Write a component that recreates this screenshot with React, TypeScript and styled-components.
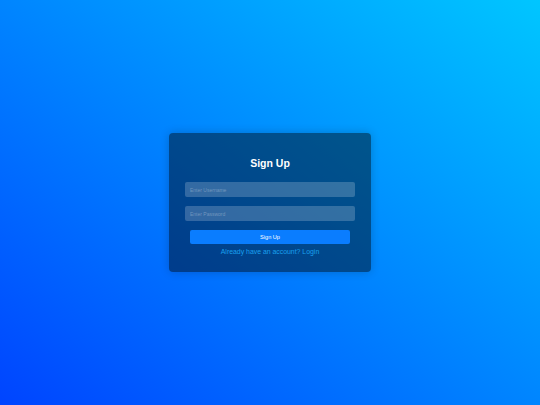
import React from "react";
import styled, { createGlobalStyle } from "styled-components";

const Global = createGlobalStyle`
  html, body { margin: 0; padding: 0; height: 100%; }
  body { font-family: "Liberation Sans", Arial, sans-serif; }
  #root { height: 100%; }
  * { box-sizing: border-box; }
`;

const Page = styled.div`
  height: 100vh;
  display: flex;
  align-items: center;
  justify-content: center;
  background: linear-gradient(to top right, #0044ff, #00c6ff);
`;

const Card = styled.div`
  width: 202px;
  padding: 24px 16px 16px;
  background: rgba(0, 0, 0, 0.45);
  border-radius: 4px;
  box-shadow: 0 0 10px rgba(0, 0, 0, 0.2);
  display: flex;
  flex-direction: column;
  align-items: center;
`;

const Title = styled.h2`
  margin: 0 0 13px;
  font-size: 10.5px;
  line-height: 12px;
  font-weight: 700;
  color: #ffffff;
`;

const Form = styled.form`
  width: 100%;
  display: flex;
  flex-direction: column;
  align-items: center;
  gap: 9px;
`;

const Input = styled.input`
  width: 100%;
  height: 15px;
  padding: 0 5px;
  border: none;
  outline: none;
  border-radius: 2px;
  background: rgba(255, 255, 255, 0.2);
  color: #fff;
  font-family: "Liberation Sans", Arial, sans-serif;
  font-size: 5px;
  &::placeholder { color: rgba(255, 255, 255, 0.3); }
`;

const Button = styled.button`
  width: 160px;
  height: 14px;
  border: none;
  border-radius: 2px;
  background: #0a7dff;
  color: #fff;
  font-family: "Liberation Sans", Arial, sans-serif;
  font-size: 5.6px;
  padding: 0;
`;

const LinkText = styled.a`
  margin-top: 4px;
  font-size: 6.9px;
  line-height: 8px;
  color: #19a0ee;
  text-decoration: none;
`;

export default function App() {
  return (
    <>
      <Global />
      <Page>
        <Card>
          <Title>Sign Up</Title>
          <Form onSubmit={(e) => e.preventDefault()}>
            <Input type="text" placeholder="Enter Username" />
            <Input type="password" placeholder="Enter Password" />
            <Button type="submit">Sign Up</Button>
          </Form>
          <LinkText href="#">Already have an account? Login</LinkText>
        </Card>
      </Page>
    </>
  );
}
